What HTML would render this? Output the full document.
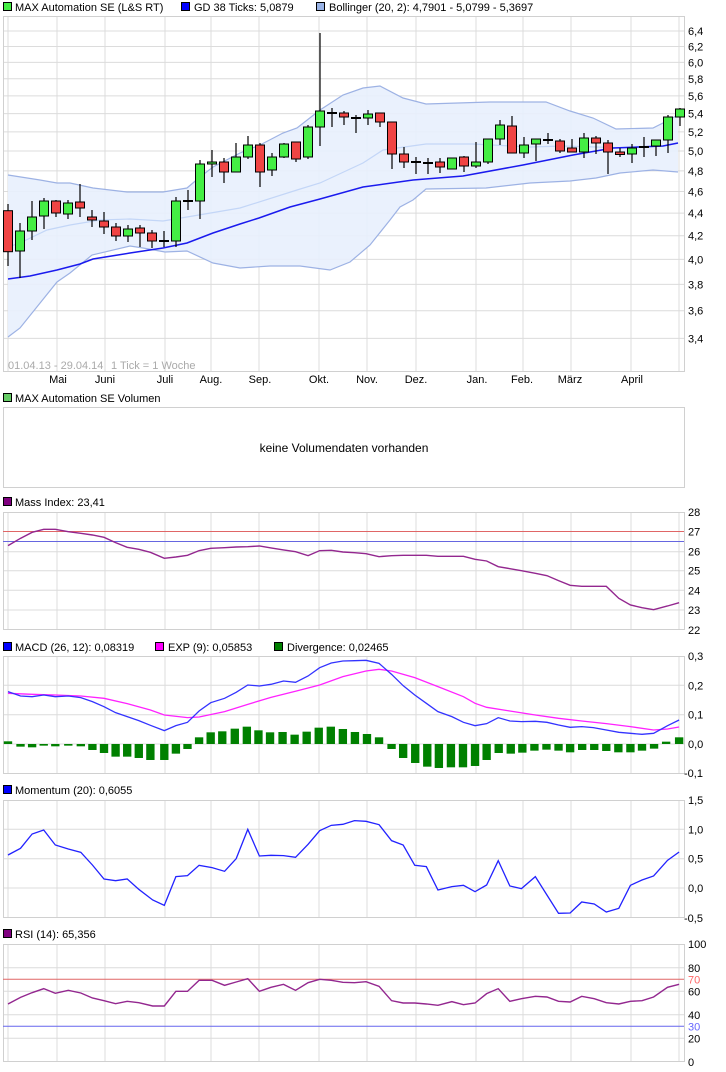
<!DOCTYPE html>
<html><head><meta charset="utf-8"><style>
html,body{margin:0;padding:0;background:#fff;}
svg{display:block;font-family:"Liberation Sans",Arial,sans-serif;font-size:11px;}
</style></head><body>
<svg width="726" height="1072" viewBox="0 0 726 1072" xmlns="http://www.w3.org/2000/svg">
<!-- legend main -->
<rect x="3.5" y="2.5" width="8" height="8" fill="#44ee44" stroke="#000"/>
<text x="15" y="11">MAX Automation SE (L&amp;S RT)</text>
<rect x="181.5" y="2.5" width="8" height="8" fill="#0000ff" stroke="#000"/>
<text x="194" y="11">GD 38 Ticks: 5,0879</text>
<rect x="316.5" y="2.5" width="8" height="8" fill="#99b3e6" stroke="#000"/>
<text x="329" y="11">Bollinger (20, 2): 4,7901 - 5,0799 - 5,3697</text>

<!-- main grid -->
<g stroke="#dcdcdc" stroke-width="1">
<line x1="3" y1="31" x2="684" y2="31"/><line x1="3" y1="46.5" x2="684" y2="46.5"/><line x1="3" y1="62.4" x2="684" y2="62.4"/><line x1="3" y1="78.8" x2="684" y2="78.8"/><line x1="3" y1="95.9" x2="684" y2="95.9"/><line x1="3" y1="113.6" x2="684" y2="113.6"/><line x1="3" y1="131.9" x2="684" y2="131.9"/><line x1="3" y1="151" x2="684" y2="151"/><line x1="3" y1="170.9" x2="684" y2="170.9"/><line x1="3" y1="191.5" x2="684" y2="191.5"/><line x1="3" y1="213.1" x2="684" y2="213.1"/><line x1="3" y1="235.7" x2="684" y2="235.7"/><line x1="3" y1="259.4" x2="684" y2="259.4"/><line x1="3" y1="284.4" x2="684" y2="284.4"/><line x1="3" y1="310.7" x2="684" y2="310.7"/><line x1="3" y1="338.4" x2="684" y2="338.4"/>
<path fill="none" d="M8,17V372M57,17V372M105,17V372M165,17V372M211,17V372M259,17V372M319,17V372M367,17V372M416,17V372M476,17V372M523,17V372M571,17V372M631,17V372M679,17V372"/>
</g>
<rect x="3.5" y="16.5" width="681" height="355" fill="none" stroke="#d0d0d0"/>

<!-- bollinger fill -->
<polygon fill="#e8f0fd" fill-opacity="0.9" points="8,175 40,180 57,183 70,183 93,188 127,192 163,192 187,188 200,177 213,167 240,153 260,145 283,133 297,128 320,110 343,95 363,88 380,86 403,98 426,104 490,102 546,102 570,111 593,118 616,129 653,128 663,123 678,115 678,172 653,170 620,173 596,178 570,181 530,183 486,188 426,189 413,200 400,207 390,220 370,245 350,262 330,270 300,266 270,266 240,268 213,263 187,251 165,252 143,248 130,246 92,255 70,273 57,282 20,328 8,337"/>
<polyline fill="none" stroke="#9db2e4" stroke-width="1.2" points="8,175 40,180 57,183 70,183 93,188 127,192 163,192 187,188 200,177 213,167 240,153 260,145 283,133 297,128 320,110 343,95 363,88 380,86 403,98 426,104 490,102 546,102 570,111 593,118 616,129 653,128 663,123 678,115"/>
<polyline fill="none" stroke="#9db2e4" stroke-width="1.2" points="8,337 20,328 57,282 70,273 92,255 130,246 143,248 165,252 187,251 213,263 240,268 270,266 300,266 330,270 350,262 370,245 390,220 400,207 413,200 426,189 486,188 530,183 570,181 596,178 620,173 653,170 678,172"/>
<polyline fill="none" stroke="#c3d6f7" stroke-width="1.2" points="8,247 20,243 47,230 70,225 100,220 130,219 163,221 187,217 240,208 297,190 320,183 363,163 383,150 426,144 473,144 530,147 563,146 596,147 623,148 663,146 678,143"/>
<polyline fill="none" stroke="#1a1aee" stroke-width="1.5" points="8,279 30,276 57,270 80,264 93,259 130,253 163,248 187,243 213,233 240,224 259,218 290,207 320,199 363,187 413,180 463,176 523,165 573,155 613,148 663,146 678,143"/>

<!-- candles -->
<g stroke="#000" stroke-width="1.2">
<line x1="8" y1="204" x2="8" y2="266"/><line x1="20" y1="223" x2="20" y2="278"/><line x1="32" y1="201" x2="32" y2="240"/><line x1="44" y1="198" x2="44" y2="229"/><line x1="56" y1="200" x2="56" y2="217"/><line x1="68" y1="200" x2="68" y2="219"/><line x1="80" y1="184" x2="80" y2="217"/><line x1="92" y1="210" x2="92" y2="227"/><line x1="104" y1="212" x2="104" y2="234"/><line x1="116" y1="223" x2="116" y2="241"/><line x1="128" y1="225" x2="128" y2="242"/><line x1="140" y1="225" x2="140" y2="247"/><line x1="152" y1="230" x2="152" y2="248"/><line x1="164" y1="231" x2="164" y2="247"/><line x1="176" y1="197" x2="176" y2="247"/><line x1="188" y1="190" x2="188" y2="210"/><line x1="200" y1="160" x2="200" y2="219"/><line x1="212" y1="150" x2="212" y2="177"/><line x1="224" y1="158" x2="224" y2="183"/><line x1="236" y1="143" x2="236" y2="172"/><line x1="248" y1="136" x2="248" y2="159"/><line x1="260" y1="143" x2="260" y2="187"/><line x1="272" y1="153" x2="272" y2="176"/><line x1="284" y1="143" x2="284" y2="158"/><line x1="296" y1="142" x2="296" y2="162"/><line x1="308" y1="125" x2="308" y2="159"/><line x1="320" y1="33" x2="320" y2="146"/><line x1="332" y1="108" x2="332" y2="127"/><line x1="344" y1="111" x2="344" y2="125"/><line x1="356" y1="115" x2="356" y2="133"/><line x1="368" y1="110" x2="368" y2="125"/><line x1="380" y1="113" x2="380" y2="127"/><line x1="392" y1="122" x2="392" y2="169"/><line x1="404" y1="147" x2="404" y2="168"/><line x1="416" y1="157" x2="416" y2="174"/><line x1="428" y1="158" x2="428" y2="174"/><line x1="440" y1="158" x2="440" y2="173"/><line x1="452" y1="158" x2="452" y2="169"/><line x1="464" y1="156" x2="464" y2="172"/><line x1="476" y1="142" x2="476" y2="168"/><line x1="488" y1="139" x2="488" y2="164"/><line x1="500" y1="120" x2="500" y2="145"/><line x1="512" y1="116" x2="512" y2="153"/><line x1="524" y1="137" x2="524" y2="158"/><line x1="536" y1="139" x2="536" y2="161"/><line x1="548" y1="133" x2="548" y2="144"/><line x1="560" y1="139" x2="560" y2="153"/><line x1="572" y1="139" x2="572" y2="152"/><line x1="584" y1="133" x2="584" y2="158"/><line x1="596" y1="136" x2="596" y2="154"/><line x1="608" y1="140" x2="608" y2="174"/><line x1="620" y1="148" x2="620" y2="157"/><line x1="632" y1="144" x2="632" y2="163"/><line x1="644" y1="137" x2="644" y2="157"/><line x1="656" y1="140" x2="656" y2="156"/><line x1="668" y1="115" x2="668" y2="153"/><line x1="680" y1="108" x2="680" y2="126"/>
<line x1="159" y1="241" x2="169" y2="241" stroke-width="2"/><line x1="183" y1="201" x2="193" y2="201" stroke-width="2"/><line x1="327" y1="113" x2="337" y2="113" stroke-width="2"/><line x1="351" y1="118" x2="361" y2="118" stroke-width="2"/><line x1="411" y1="162" x2="421" y2="162" stroke-width="2"/><line x1="423" y1="163" x2="433" y2="163" stroke-width="2"/><line x1="543" y1="140" x2="553" y2="140" stroke-width="2"/><line x1="639" y1="147" x2="649" y2="147" stroke-width="2"/>
</g>
<g stroke="#000" stroke-width="1">
<g fill="#f04444">
<rect x="3.5" y="210.7" width="9" height="41"/><rect x="51.5" y="201" width="9" height="12"/><rect x="75.5" y="202" width="9" height="6"/><rect x="87.5" y="217" width="9" height="3"/><rect x="99.5" y="221" width="9" height="6"/><rect x="111.5" y="227" width="9" height="9"/><rect x="135.5" y="228" width="9" height="5"/><rect x="147.5" y="233" width="9" height="8"/><rect x="219.5" y="162" width="9" height="10"/><rect x="255.5" y="145" width="9" height="27"/><rect x="291.5" y="142" width="9" height="17"/><rect x="339.5" y="113" width="9" height="4"/><rect x="375.5" y="113" width="9" height="9"/><rect x="387.5" y="122" width="9" height="32"/><rect x="399.5" y="154" width="9" height="8"/><rect x="435.5" y="162" width="9" height="5"/><rect x="459.5" y="157" width="9" height="9"/><rect x="507.5" y="126" width="9" height="27"/><rect x="555.5" y="141" width="9" height="10"/><rect x="567.5" y="148" width="9" height="4"/><rect x="591.5" y="138" width="9" height="5"/><rect x="603.5" y="143" width="9" height="9"/><rect x="615.5" y="152" width="9" height="2.5"/>
</g>
<g fill="#44ee44">
<rect x="15.5" y="231" width="9" height="20"/><rect x="27.5" y="217" width="9" height="14"/><rect x="39.5" y="201" width="9" height="15"/><rect x="63.5" y="203" width="9" height="11"/><rect x="123.5" y="229" width="9" height="7"/><rect x="171.5" y="201" width="9" height="40"/><rect x="195.5" y="164" width="9" height="37"/><rect x="207.5" y="162" width="9" height="2"/><rect x="231.5" y="157" width="9" height="15"/><rect x="243.5" y="145" width="9" height="12"/><rect x="267.5" y="157" width="9" height="13"/><rect x="279.5" y="144" width="9" height="13"/><rect x="303.5" y="127" width="9" height="30"/><rect x="315.5" y="111" width="9" height="16"/><rect x="363.5" y="114" width="9" height="4"/><rect x="447.5" y="158" width="9" height="11"/><rect x="471.5" y="162" width="9" height="4"/><rect x="483.5" y="139" width="9" height="23"/><rect x="495.5" y="125" width="9" height="14"/><rect x="519.5" y="145" width="9" height="8"/><rect x="531.5" y="139" width="9" height="5"/><rect x="579.5" y="138" width="9" height="14"/><rect x="627.5" y="148" width="9" height="6"/><rect x="651.5" y="140" width="9" height="6"/><rect x="663.5" y="117" width="9" height="23"/><rect x="675.5" y="109" width="9" height="8"/>
</g>
</g>

<!-- main axis labels -->
<g fill="#000">
<text x="688" y="35">6,4</text><text x="688" y="50.5">6,2</text><text x="688" y="66.4">6,0</text><text x="688" y="82.8">5,8</text><text x="688" y="99.9">5,6</text><text x="688" y="117.6">5,4</text><text x="688" y="135.9">5,2</text><text x="688" y="155">5,0</text><text x="688" y="174.9">4,8</text><text x="688" y="195.5">4,6</text><text x="688" y="217.1">4,4</text><text x="688" y="239.7">4,2</text><text x="688" y="263.4">4,0</text><text x="688" y="288.4">3,8</text><text x="688" y="314.7">3,6</text><text x="688" y="342.4">3,4</text>
</g>
<text x="8" y="369" fill="#aaaaaa">01.04.13 - 29.04.14</text>
<text x="111" y="369" fill="#aaaaaa">1 Tick = 1 Woche</text>
<g text-anchor="middle">
<text x="58" y="383">Mai</text><text x="105" y="383">Juni</text><text x="165" y="383">Juli</text><text x="211" y="383">Aug.</text><text x="260" y="383">Sep.</text><text x="319" y="383">Okt.</text><text x="367" y="383">Nov.</text><text x="416" y="383">Dez.</text><text x="477" y="383">Jan.</text><text x="522" y="383">Feb.</text><text x="570" y="383">März</text><text x="632" y="383">April</text>
</g>

<!-- volume -->
<rect x="3.5" y="393.5" width="8" height="8" fill="#66cc66" stroke="#000"/>
<text x="15" y="402">MAX Automation SE Volumen</text>
<rect x="3.5" y="407.5" width="681" height="80" fill="none" stroke="#d0d0d0"/>
<text x="344" y="452" text-anchor="middle" font-size="12">keine Volumendaten vorhanden</text>

<!-- mass index -->
<rect x="3.5" y="497.5" width="8" height="8" fill="#800080" stroke="#000"/>
<text x="15" y="506">Mass Index: 23,41</text>
<g stroke="#dcdcdc" fill="none">
<line x1="3" y1="551.7" x2="684" y2="551.7"/><line x1="3" y1="570.7" x2="684" y2="570.7"/><line x1="3" y1="590.3" x2="684" y2="590.3"/><line x1="3" y1="610" x2="684" y2="610"/>
<path d="M8,512V630M57,512V630M105,512V630M165,512V630M211,512V630M259,512V630M319,512V630M367,512V630M416,512V630M476,512V630M523,512V630M571,512V630M631,512V630M679,512V630"/>
</g>
<rect x="3.5" y="512.5" width="681" height="117" fill="none" stroke="#d0d0d0"/>
<line x1="3" y1="531.5" x2="684" y2="531.5" stroke="#e06666"/>
<line x1="3" y1="541.5" x2="684" y2="541.5" stroke="#6666e0"/>
<g transform="translate(-0.35,490) scale(0.4638,0.3333)">
<polyline fill="none" stroke="#93278f" stroke-width="1.4" vector-effect="non-scaling-stroke" points="18,167 45,145 70,127 95,118 120,118 148,125 175,130 200,135 225,142 250,158 275,172 300,178 325,187 355,205 380,201 405,196 430,182 455,175 485,173 510,171 535,170 560,168 585,174 612,180 638,185 665,197 690,182 715,181 740,186 765,188 790,191 818,200 845,197 870,196 895,196 920,196 945,199 975,199 1000,199 1025,208 1050,213 1075,230 1100,236 1125,242 1155,250 1180,257 1205,272 1230,286 1255,289 1280,289 1308,289 1335,325 1360,345 1385,353 1410,359 1440,348 1465,338"/>
</g>
<g><text x="688" y="516">28</text><text x="688" y="535.3">27</text><text x="688" y="555.7">26</text><text x="688" y="574.7">25</text><text x="688" y="594.3">24</text><text x="688" y="614">23</text><text x="688" y="634">22</text></g>

<!-- MACD -->
<rect x="3.5" y="642.5" width="8" height="8" fill="#0000ff" stroke="#000"/>
<text x="15" y="651">MACD (26, 12): 0,08319</text>
<rect x="155.5" y="642.5" width="8" height="8" fill="#ff00ff" stroke="#000"/>
<text x="168" y="651">EXP (9): 0,05853</text>
<rect x="274.5" y="642.5" width="8" height="8" fill="#008000" stroke="#000"/>
<text x="287" y="651">Divergence: 0,02465</text>
<g stroke="#dcdcdc" fill="none">
<line x1="3" y1="685.3" x2="684" y2="685.3"/><line x1="3" y1="714.7" x2="684" y2="714.7"/><line x1="3" y1="744" x2="684" y2="744"/>
<path d="M8,656V773M57,656V773M105,656V773M165,656V773M211,656V773M259,656V773M319,656V773M367,656V773M416,656V773M476,656V773M523,656V773M571,656V773M631,656V773M679,656V773"/>
</g>
<rect x="3.5" y="656.5" width="681" height="117" fill="none" stroke="#d0d0d0"/>
<g transform="translate(-0.35,635) scale(0.4638,0.3333)">
<g fill="#008000">
<rect x="9" y="319" width="18" height="8"/><rect x="36" y="327" width="18" height="8"/><rect x="61" y="327" width="18" height="10"/><rect x="86" y="327" width="18" height="5"/><rect x="111" y="327" width="18" height="7"/><rect x="139" y="327" width="18" height="5"/><rect x="166" y="327" width="18" height="7"/><rect x="191" y="327" width="18" height="18"/><rect x="216" y="327" width="18" height="27"/><rect x="241" y="327" width="18" height="38"/><rect x="266" y="327" width="18" height="38"/><rect x="291" y="327" width="18" height="42"/><rect x="316" y="327" width="18" height="48"/><rect x="346" y="327" width="18" height="48"/><rect x="371" y="327" width="18" height="29"/><rect x="396" y="327" width="18" height="15"/><rect x="421" y="307" width="18" height="20"/><rect x="446" y="292" width="18" height="35"/><rect x="471" y="289" width="18" height="38"/><rect x="498" y="281" width="18" height="46"/><rect x="524" y="275" width="18" height="52"/><rect x="549" y="286" width="18" height="41"/><rect x="574" y="292" width="18" height="35"/><rect x="601" y="291" width="18" height="36"/><rect x="627" y="299" width="18" height="28"/><rect x="653" y="290" width="18" height="37"/><rect x="679" y="278" width="18" height="49"/><rect x="705" y="275" width="18" height="52"/><rect x="731" y="282" width="18" height="45"/><rect x="757" y="291" width="18" height="36"/><rect x="783" y="297" width="18" height="30"/><rect x="809" y="307" width="18" height="20"/><rect x="836" y="327" width="18" height="15"/><rect x="861" y="327" width="18" height="42"/><rect x="887" y="327" width="18" height="57"/><rect x="913" y="327" width="18" height="68"/><rect x="938" y="327" width="18" height="72"/><rect x="964" y="327" width="18" height="70"/><rect x="990" y="327" width="18" height="70"/><rect x="1016" y="327" width="18" height="66"/><rect x="1041" y="327" width="18" height="48"/><rect x="1067" y="327" width="18" height="27"/><rect x="1093" y="327" width="18" height="29"/><rect x="1118" y="327" width="18" height="26"/><rect x="1144" y="327" width="18" height="20"/><rect x="1170" y="327" width="18" height="17"/><rect x="1196" y="327" width="18" height="20"/><rect x="1221" y="327" width="18" height="25"/><rect x="1247" y="327" width="18" height="18"/><rect x="1273" y="327" width="18" height="18"/><rect x="1299" y="327" width="18" height="21"/><rect x="1325" y="327" width="18" height="25"/><rect x="1351" y="327" width="18" height="25"/><rect x="1376" y="327" width="18" height="20"/><rect x="1402" y="327" width="18" height="14"/><rect x="1428" y="320" width="18" height="7"/><rect x="1456" y="307" width="18" height="20"/>
</g>
<polyline fill="none" stroke="#ff22ff" stroke-width="1.3" vector-effect="non-scaling-stroke" points="18,175 70,178 120,180 175,183 225,190 275,206 325,225 355,240 405,248 430,246 485,230 535,208 585,187 640,168 690,150 740,125 790,108 818,103 845,108 895,128 945,155 1000,185 1025,205 1050,217 1100,228 1155,240 1205,250 1255,258 1308,266 1360,275 1410,285 1440,282 1465,276"/>
<polyline fill="none" stroke="#3333ff" stroke-width="1.3" vector-effect="non-scaling-stroke" points="18,170 45,183 70,185 95,180 120,185 148,183 175,188 200,200 225,215 250,233 275,245 300,257 325,271 355,287 380,272 405,262 430,228 455,203 485,190 510,172 535,150 560,153 585,148 612,138 638,142 665,123 690,98 715,84 740,78 765,77 790,76 818,85 845,118 870,152 895,180 920,205 945,230 975,245 1000,262 1025,272 1050,266 1075,248 1100,258 1125,260 1155,259 1180,262 1205,270 1230,277 1255,275 1280,278 1308,285 1335,292 1360,295 1385,298 1410,295 1440,272 1465,255"/>
</g>
<g><text x="688" y="660">0,3</text><text x="688" y="689.3">0,2</text><text x="688" y="718.7">0,1</text><text x="688" y="748">0,0</text><text x="684" y="777">-0,1</text></g>

<!-- Momentum -->
<rect x="3.5" y="785.5" width="8" height="8" fill="#0000ff" stroke="#000"/>
<text x="15" y="794">Momentum (20): 0,6055</text>
<g stroke="#dcdcdc" fill="none">
<line x1="3" y1="829.3" x2="684" y2="829.3"/><line x1="3" y1="858.7" x2="684" y2="858.7"/><line x1="3" y1="888" x2="684" y2="888"/>
<path d="M8,800V918M57,800V918M105,800V918M165,800V918M211,800V918M259,800V918M319,800V918M367,800V918M416,800V918M476,800V918M523,800V918M571,800V918M631,800V918M679,800V918"/>
</g>
<rect x="3.5" y="800.5" width="681" height="117" fill="none" stroke="#d0d0d0"/>
<g transform="translate(-0.35,780) scale(0.4638,0.3333)">
<polyline fill="none" stroke="#2222ff" stroke-width="1.3" vector-effect="non-scaling-stroke" points="18,225 45,205 70,162 95,150 120,195 148,207 175,217 200,255 225,297 250,302 275,297 300,328 330,360 355,376 380,290 405,287 430,256 458,263 485,274 510,236 535,148 560,228 585,226 612,227 638,232 665,193 690,152 715,136 740,133 765,122 790,124 818,134 845,182 870,195 895,256 920,260 945,330 975,320 1000,316 1025,335 1050,315 1075,242 1100,318 1125,326 1155,290 1180,345 1205,400 1230,399 1255,366 1282,372 1308,396 1335,385 1360,316 1385,300 1410,288 1440,241 1465,216"/>
</g>
<g><text x="688" y="804">1,5</text><text x="688" y="833.3">1,0</text><text x="688" y="862.7">0,5</text><text x="688" y="892">0,0</text><text x="684" y="922">-0,5</text></g>

<!-- RSI -->
<rect x="3.5" y="929.5" width="8" height="8" fill="#800080" stroke="#000"/>
<text x="15" y="938">RSI (14): 65,356</text>
<g stroke="#dcdcdc" fill="none">
<line x1="3" y1="967.7" x2="684" y2="967.7"/><line x1="3" y1="991.3" x2="684" y2="991.3"/><line x1="3" y1="1014.7" x2="684" y2="1014.7"/><line x1="3" y1="1038.3" x2="684" y2="1038.3"/>
<path d="M8,944V1062M57,944V1062M105,944V1062M165,944V1062M211,944V1062M259,944V1062M319,944V1062M367,944V1062M416,944V1062M476,944V1062M523,944V1062M571,944V1062M631,944V1062M679,944V1062"/>
</g>
<rect x="3.5" y="944.5" width="681" height="117" fill="none" stroke="#d0d0d0"/>
<line x1="3" y1="979.3" x2="684" y2="979.3" stroke="#e06666"/>
<line x1="3" y1="1026.3" x2="684" y2="1026.3" stroke="#6666ee"/>
<g transform="translate(-0.35,922) scale(0.4638,0.3333)">
<polyline fill="none" stroke="#93278f" stroke-width="1.4" vector-effect="non-scaling-stroke" points="18,246 45,226 70,212 95,200 120,214 148,205 175,213 200,228 225,236 250,245 275,238 300,242 330,252 355,252 380,208 405,208 430,175 458,175 485,190 510,180 535,170 560,208 585,196 612,187 638,205 665,182 690,172 715,175 740,181 765,182 790,179 818,193 845,236 870,243 895,243 920,246 945,250 975,239 1000,248 1025,243 1050,215 1075,200 1100,238 1125,230 1155,223 1180,225 1205,238 1230,240 1255,223 1282,230 1308,242 1335,246 1360,238 1385,236 1410,225 1440,196 1465,187"/>
</g>
<g><text x="688" y="948">100</text><text x="688" y="972">80</text><text x="688" y="983.3" fill="#ff6666">70</text><text x="688" y="995.3">60</text><text x="688" y="1019">40</text><text x="688" y="1030.3" fill="#6666ff">30</text><text x="688" y="1042.3">20</text><text x="688" y="1066">0</text></g>
</svg>
</body></html>
